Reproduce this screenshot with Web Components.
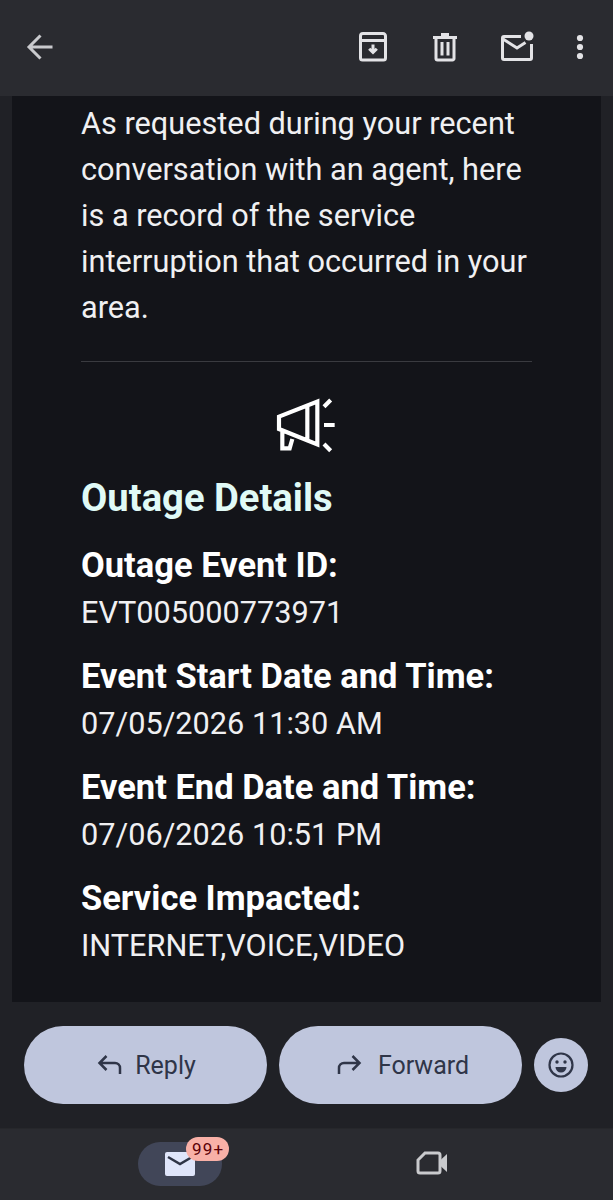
<!doctype html>
<html><head><meta charset="utf-8">
<style>
html,body{margin:0;padding:0;background:#202126;}
body{width:613px;height:1200px;overflow:hidden;font-family:Roboto,sans-serif;}
</style></head><body>
<mail-screen>
  <top-bar></top-bar>
  <mail-body>
    <p-text>As requested during your recent conversation with an agent, here is a record of the service interruption that occurred in your area.</p-text>
    <outage-details>
      <detail-row label="Outage Event ID:" value="EVT005000773971"></detail-row>
      <detail-row label="Event Start Date and Time:" value="07/05/2026 11:30 AM"></detail-row>
      <detail-row label="Event End Date and Time:" value="07/06/2026 10:51 PM"></detail-row>
      <detail-row label="Service Impacted:" value="INTERNET,VOICE,VIDEO"></detail-row>
    </outage-details>
  </mail-body>
  <action-bar></action-bar>
  <bottom-nav></bottom-nav>
</mail-screen>
<script>
function def(name,html){customElements.define(name,class extends HTMLElement{
  connectedCallback(){ if(this.shadowRoot)return; const r=this.attachShadow({mode:'open'}); 
    r.innerHTML=typeof html==='function'?html(this):html; }
});}
def('mail-screen',`<style>:host{display:flex;flex-direction:column;width:613px;height:1200px}</style><slot></slot>`);
def('top-bar',`<style>
:host{display:flex;align-items:center;justify-content:space-between;height:96px;background:#2a2b30;padding:0 27px 2px 25px;box-sizing:border-box;flex:none}
.r{display:flex;align-items:center;gap:40px}
svg{display:block;fill:none;stroke:#e3e3e6;stroke-width:3}
</style>
<svg width="32" height="32" viewBox="0 0 32 32" style="stroke:#c9cacd"><path d="M27.500 16H5M15.500 4.500 4 16l11.500 11.500"/></svg>
<div class="r">
<svg width="32" height="32" viewBox="0 0 32 32"><path d="M6 2.500h20a2.500 2.500 0 0 1 2.500 2.500v22a2 2 0 0 1-2 2h-21a2 2 0 0 1-2-2V5A2.500 2.500 0 0 1 6 2.500zM4 9.500h24"/><path d="M16 13.500v8M12.200 17.700 16 21.500l3.800-3.800"/></svg>
<svg width="32" height="32" viewBox="0 0 32 32" style="margin-right:-1px"><path d="M4 6.500h24M12 3.500h8M7 6.500v21a1.500 1.500 0 0 0 1.500 1.500h15a1.500 1.500 0 0 0 1.500-1.500v-21M13 11v13.500M19 11v13.500" /></svg>
<svg width="34" height="32" viewBox="0 0 34 32"><path d="M21 5.500H4a1.500 1.500 0 0 0-1.500 1.500v20a1.500 1.500 0 0 0 1.500 1.500h26a1.500 1.500 0 0 0 1.500-1.500V13"/><path d="M3 8l14 9 8.500-5.500"/><circle cx="29" cy="5" r="4.500" fill="#e3e3e6" stroke="none"/></svg>
<svg width="12" height="32" viewBox="0 0 12 32"><circle cx="6" cy="7" r="3.100" fill="#e3e3e6" stroke="none"/><circle cx="6" cy="16" r="3.100" fill="#e3e3e6" stroke="none"/><circle cx="6" cy="25" r="3.100" fill="#e3e3e6" stroke="none"/></svg>
</div>`);
def('mail-body',`<style>:host{display:block;box-sizing:border-box;height:906px;margin:0 12px 0 12px;background:#131419;padding:4.500px 69px 0 69px;color:#fff;flex:none}</style><slot></slot>`);
def('p-text',`<style>:host{display:block;font-size:30.700px;line-height:46.200px;color:#f0f0f2;padding-bottom:29.500px;border-bottom:1px solid #3a3b40}</style><slot></slot>`);
def('outage-details',`<style>
:host{display:block;padding-top:23px}
svg{display:block;margin:0 0 0 168px;fill:none;stroke:#fff;stroke-width:12.500}
h2{margin:14px 0 20px;font:700 38.200px/48px Roboto,sans-serif;color:#e0faf6}
</style>
<svg width="110" height="75" viewBox="0 0 330 225"><path d="M90 95 205 50V178L90 132ZM175 62V166M100 138V190H122L130 162"/><path d="M225 65 245 45M225 120H257M225 177 245 197"/></svg>
<h2>Outage Details</h2><slot></slot>`);
def('detail-row',h=>`<style>
:host{display:block;margin-bottom:16px}
.l{font:700 34.500px/47px Roboto,sans-serif;color:#fff}
.v{font:400 30.700px/48px Roboto,sans-serif;color:#f0f0f2}
</style><div class="l">${h.getAttribute('label')}</div><div class="v">${h.getAttribute('value')}</div>`);
def('action-bar',`<style>
:host{display:flex;align-items:center;gap:12px;height:126px;padding:0 24px 0 24px;box-sizing:border-box;background:#202126;flex:none}
.b{width:243px;height:78px;border-radius:39px;background:#bfc6dd;display:flex;align-items:center;justify-content:center;gap:15px;color:#2f3548;font:400 25px Roboto,sans-serif;flex:none;padding-left:5px;box-sizing:border-box}
.b.rp{gap:13px;padding-left:1px}
.e{width:54px;height:54px;border-radius:50%;background:#bfc6dd;display:flex;align-items:center;justify-content:center;flex:none}
svg{display:block;fill:none;stroke:#2f3548;stroke-width:2.500}
</style>
<div class="b rp"><svg width="26" height="24" viewBox="0 0 26 24"><path d="M24 21v-6a5 5 0 0 0-5-5H4M10.500 3 3.500 10l7 7"/></svg>Reply</div>
<div class="b"><svg width="26" height="24" viewBox="0 0 26 24"><path d="M2 21v-6a5 5 0 0 1 5-5h15M15.500 3l7 7-7 7"/></svg>Forward</div>
<div class="e"><svg width="28" height="28" viewBox="0 0 28 28" style="stroke-width:2.200"><circle cx="14" cy="14" r="11.500"/><circle cx="10" cy="11" r="1.700" fill="#2f3548" stroke="none"/><circle cx="18" cy="11" r="1.700" fill="#2f3548" stroke="none"/><path d="M8.500 16h11a5.500 5.500 0 0 1-11 0z" fill="#2f3548" stroke="none"/></svg></div>`);
def('bottom-nav',`<style>
:host{display:flex;height:72px;background:#2a2b30;position:relative;flex:none;border-top:1px solid #26272b;box-sizing:border-box}
.t{flex:1;display:flex;justify-content:center;padding-top:13px;box-sizing:border-box}
.p{width:84px;height:44px;border-radius:22px;background:#414658;display:flex;align-items:center;justify-content:center;position:relative;margin-left:-2px}
.badge{position:absolute;left:48px;top:-5px;height:24px;padding:0 5px 0 6px;border-radius:12px;background:#f8b0a7;color:#5c0008;font:400 17px/24px Roboto,sans-serif;letter-spacing:1.200px}
svg{display:block}
</style>
<div class="t" style="flex:0 0 362px"><div class="p"><svg width="30" height="24" viewBox="0 0 30 24"><rect width="30" height="24" rx="2" fill="#dfe5fa"/><path d="M3 5l12 7 12-7" fill="none" stroke="#2e3446" stroke-width="2.500"/></svg><span class="badge">99+</span></div></div>
<div class="t" style="flex:0 0 140px;padding-top:22px"><svg width="32" height="24" viewBox="0 0 32 24" fill="none"><path d="M9 2h13a2 2 0 0 1 2 2v16a2 2 0 0 1-2 2H4a2 2 0 0 1-2-2V9z" stroke="#c9cacd" stroke-width="3"/><path d="M24 9.500 31 3v18l-7-6.500z" fill="#c9cacd"/></svg></div>`);
</script>
</body></html>
